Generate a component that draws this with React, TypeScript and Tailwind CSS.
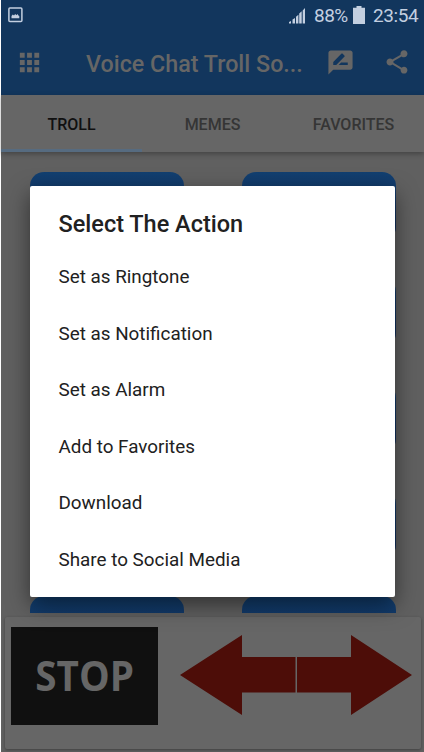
import { MdApps, MdRateReview, MdShare } from "react-icons/md";

const TABS = ["TROLL", "MEMES", "FAVORITES"];

const ACTIONS = [
  "Set as Ringtone",
  "Set as Notification",
  "Set as Alarm",
  "Add to Favorites",
  "Download",
  "Share to Social Media",
];

const SOUNDS = [1, 2, 3, 4, 5, 6, 7, 8, 9, 10];

function StatusBar() {
  return (
    <div className="flex h-[31px] items-center justify-between pl-[7px] pr-[5px] text-[#c3cfe0]">
      <svg width="15" height="16" viewBox="0 0 15 16" className="mt-[-2px]">
        <rect x="0.9" y="1" width="13" height="13.6" rx="1" fill="none" stroke="currentColor" strokeWidth="1.5" />
        <path d="M3.5 11.3V9l1.3-1.4 1.2.9 1.2-1.6 1.2 1.4 1-1.3 1 1.5.9.5v2.3z" fill="currentColor" />
      </svg>
      <div className="flex items-center">
        <svg width="17" height="17" viewBox="0 0 17 17" className="mr-[8px] mt-[-1px]">
          <path
            d="M0 16.5v-1.5l2-1v2.5zM3.5 16.5v-4l2.5-1.5v5.5zM7 16.5V9.8l2.4-2v8.7zM10.2 16.5V6.5l2.5-2.2v12.2zM13.7 16.5v-13L16 1v15.5z"
            fill="currentColor"
          />
        </svg>
        <span className="mt-[-1px] w-[35px] whitespace-nowrap text-[19px] leading-none tracking-[-0.5px]">88%</span>
        <svg width="12" height="18" viewBox="0 0 12 18" className="ml-[4px] mt-[-2px]">
          <path d="M3.5 0h5v1.7H12V18H0V1.7h3.5z" fill="currentColor" />
        </svg>
        <span className="ml-2 w-[46px] whitespace-nowrap text-[19px] leading-none tracking-[-0.4px]">23:54</span>
      </div>
    </div>
  );
}

function Toolbar() {
  return (
    <div className="flex h-16 items-center pl-[14px] pr-[13px] text-[#666666]">
      <MdApps size={29} className="mt-[-1px]" />
      <h1 className="ml-[42px] mt-[3px] w-[225px] whitespace-nowrap text-[23.3px] font-medium leading-none">
        Voice Chat Troll So...
      </h1>
      <MdRateReview size={29} className="ml-[15px] mt-[-2px]" />
      <MdShare size={28} className="ml-auto mt-[-2px]" />
    </div>
  );
}

function TabBar() {
  return (
    <div className="relative z-10 grid h-[57px] grid-cols-3 bg-[#666666] shadow-[0_2px_5px_rgba(0,0,0,0.3)]">
      {TABS.map((tab, i) => (
        <div
          key={tab}
          className={`flex items-center justify-center border-b-[3px] pt-[5px] text-[16px] font-medium ${
            i === 0 ? "border-[#566b80] text-[#101010]" : "border-transparent text-[#353535]"
          }`}
        >
          {tab}
        </div>
      ))}
    </div>
  );
}

function PlayerBar() {
  return (
    <div className="ml-[4px] mr-[3px] flex h-[132px] rounded-[2px] bg-[#666666] pl-[6px] pt-[10px] shadow-[0_1px_3px_rgba(0,0,0,0.35)]">
      <div className="flex h-[98px] w-[147px] items-center justify-center bg-[#101010] pb-1 font-['Open_Sans',sans-serif] text-[42px] font-bold text-[#666666]">
        <span className="inline-block scale-x-[0.92]">STOP</span>
      </div>
      <svg width="116" height="80" viewBox="0 0 116 80" className="ml-[22px] mt-2">
        <path d="M0 40 62 0v22h53.5v35.5H62V80z" fill="#4d0d08" />
      </svg>
      <svg width="116" height="80" viewBox="0 0 116 80" className="mt-2">
        <path d="M116 40 55 0v22H1v35.5h54V80z" fill="#4d0d08" />
      </svg>
    </div>
  );
}

function ActionDialog() {
  return (
    <div className="absolute left-[30px] top-[186px] z-20 h-[410.5px] w-[365px] rounded-[2px] bg-white pl-[28.5px] shadow-[0_8px_22px_rgba(0,0,0,0.5)]">
      <h2 className="flex h-[63px] items-center pt-[15px] text-[23.5px] font-medium text-[#212121]">
        Select The Action
      </h2>
      <ul>
        {ACTIONS.map((action) => (
          <li key={action} className="flex h-[56.5px] items-center text-[18.85px] text-[#212121]">
            {action}
          </li>
        ))}
      </ul>
    </div>
  );
}

export default function App() {
  return (
    <div className="relative h-[752px] w-[424px] overflow-hidden bg-white pl-px font-[Roboto,sans-serif]">
      <div className="flex h-full flex-col bg-[#606060]">
        <header className="h-[95px] bg-[#12365d]">
          <StatusBar />
          <Toolbar />
        </header>
        <TabBar />
        <div className="h-[465px] overflow-hidden pl-[29px] pr-[28px] pt-5">
          <div className="grid h-[441px] grid-cols-2 content-start gap-x-[58px] gap-y-[37px] overflow-hidden">
            {SOUNDS.map((id) => (
              <div key={id} className="h-[69px] rounded-[14px] bg-gradient-to-b from-[#123f70] to-[#102b58]" />
            ))}
          </div>
        </div>
        <PlayerBar />
      </div>
      <ActionDialog />
    </div>
  );
}
